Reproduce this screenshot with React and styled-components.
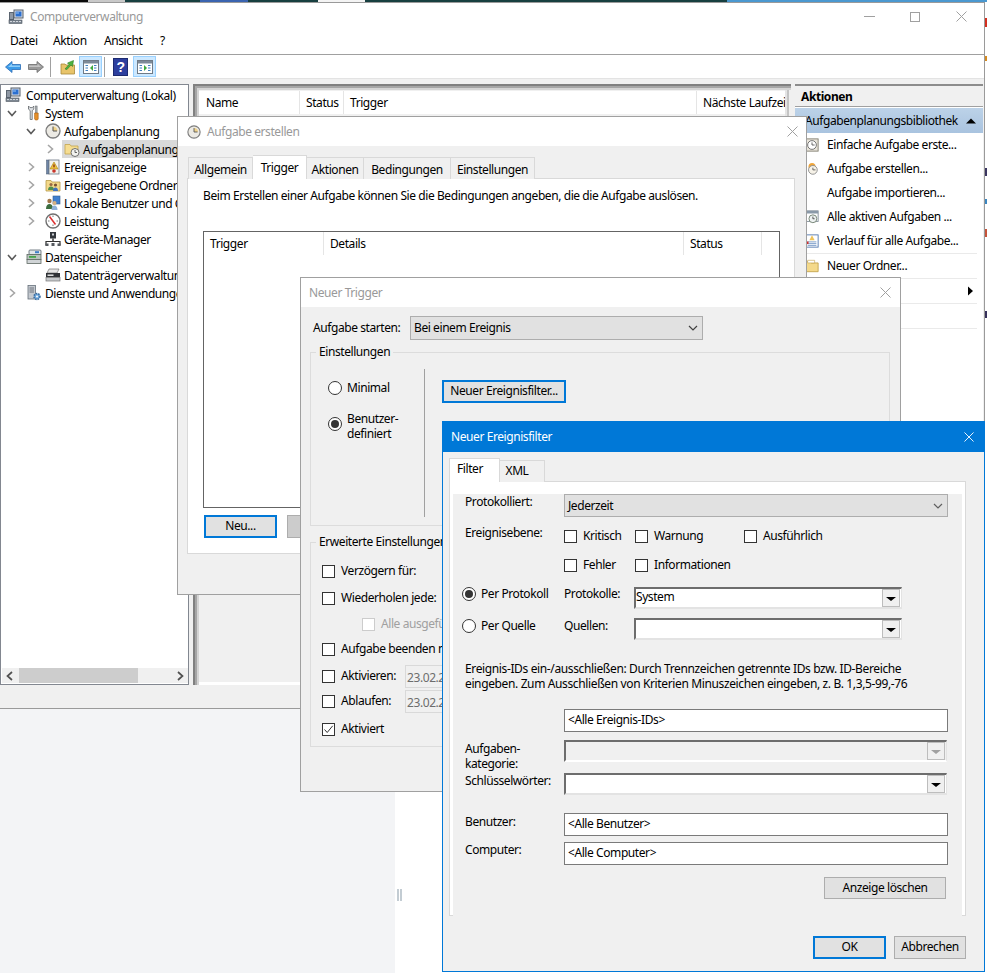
import React from "react";
import styled, { createGlobalStyle } from "styled-components";

const GlobalStyle = createGlobalStyle`
  html, body { margin: 0; padding: 0; background: #fff; overflow: hidden; }
  * { box-sizing: border-box; }
  body {
    font-family: "Noto Sans", "Open Sans", sans-serif;
    font-size: 12px;
    line-height: 16px;
    letter-spacing: -0.42px;
    color: #000;
  }
`;

/* ---------- desktop ---------- */

const Desktop = styled.div`
  position: relative;
  width: 987px;
  height: 973px;
  overflow: hidden;
`;
const Backdrop = styled.div`
  display: grid;
  grid-template-columns: 395px 1fr;
  height: 973px;
`;
const BackdropLeft = styled.div`
  background: #f3f4f6;
`;
const BackdropRight = styled.div`
  background: #fff;
  padding: 889px 0 0 2px;
`;
const Grip = styled.div`
  width: 5px;
  height: 12px;
  border-left: 2px solid #c3ccd3;
  border-right: 2px solid #c3ccd3;
`;
const TopStrip = styled.div`
  position: absolute;
  left: 0;
  top: 0;
  width: 987px;
  height: 2px;
  display: flex;
`;
const StripPiece = styled.div`
  width: ${(p) => p.$w}px;
  background: ${(p) => p.$c};
`;
const Speck = styled.div`
  position: absolute;
  left: 985px;
  top: ${(p) => p.$y}px;
  width: 2px;
  height: ${(p) => p.$h || 8}px;
  background: ${(p) => p.$c};
`;
const Window = styled.div`
  position: absolute;
  left: ${(p) => p.$x}px;
  top: ${(p) => p.$y}px;
  width: ${(p) => p.$w}px;
  height: ${(p) => p.$h}px;
  background: #f0f0f0;
  border: 1px solid ${(p) => p.$border || "#a0a0a0"};
  overflow: hidden;
  z-index: ${(p) => p.$z};
  display: flex;
  flex-direction: column;
`;
const TitleBar = styled.div`
  flex: none;
  height: ${(p) => p.$h}px;
  background: ${(p) => (p.$active ? "#0078d7" : "#fff")};
  color: ${(p) => (p.$active ? "#fff" : "#999")};
  display: flex;
  align-items: center;
  padding-left: ${(p) => p.$pad}px;
  gap: 6px;
`;
const TitleText = styled.span`
  flex: 1;
  white-space: nowrap;
`;
const CloseSlot = styled.div`
  flex: none;
  width: 46px;
  display: flex;
  justify-content: center;
  align-items: center;
`;

/* ---------- main window ---------- */

const MenuBar = styled.div`
  flex: none;
  height: 25px;
  background: #fff;
  border-bottom: 1px solid #a0a0a0;
  display: flex;
  align-items: center;
  padding: 0 0 2px 10px;
`;
const MenuItem = styled.span`
  flex: none;
  width: ${(p) => p.$w}px;
`;
const ToolBar = styled.div`
  flex: none;
  height: 24px;
  background: #fff;
  border-bottom: 1px solid #e3e3e3;
  display: flex;
  align-items: center;
  padding-left: 5px;
`;
const ToolGap = styled.div`
  width: ${(p) => p.$w}px;
  flex: none;
`;
const ToolSep = styled.div`
  flex: none;
  width: 1px;
  height: 20px;
  background: #a0a0a0;
`;
const ToolToggle = styled.div`
  flex: none;
  width: 23px;
  height: 21px;
  background: #cce8ff;
  border: 1px solid #99d1ff;
  display: flex;
  align-items: center;
  justify-content: center;
`;
const Workspace = styled.div`
  flex: none;
  height: 606px;
  padding-top: 5px;
  display: grid;
  grid-template-columns: 189px 598px 188px;
  column-gap: 4px;
`;
const TreePanel = styled.div`
  background: #fff;
  border: 1px solid #828790;
  display: flex;
  flex-direction: column;
  overflow: hidden;
`;
const TreeRows = styled.div`
  flex: 1;
  padding-top: 1px;
`;
const TreeRow = styled.div`
  height: 18px;
  display: flex;
  align-items: center;
  white-space: nowrap;
  padding-left: ${(p) => p.$indent}px;
  gap: ${(p) => p.$gap ?? 3}px;
`;
const TreeLabel = styled.span`
  padding-top: 1px;
`;
const Expander = styled.div`
  flex: none;
  width: 16px;
  display: flex;
  align-items: center;
`;
const TreeSelected = styled.div`
  display: flex;
  align-items: center;
  gap: 3px;
  height: 18px;
  background: #d9d9d9;
  padding: 0 30px 0 2px;
  margin-left: -2px;
`;
const HScroll = styled.div`
  flex: none;
  height: 15px;
  margin: 0 0 1px 1px;
  background: #f0f0f0;
  display: flex;
  align-items: center;
  justify-content: space-between;
`;
const ScrollThumb = styled.div`
  width: 119px;
  height: 15px;
  background: #cdcdcd;
  margin-left: 2px;
`;
const ScrollBtn = styled.div`
  flex: none;
  width: 15px;
  display: flex;
  justify-content: center;
`;
const ScrollSpace = styled.div`
  flex: 1;
`;
const CenterPanel = styled.div`
  padding: 7px 6px 4px 6px;
  background: #f0f0f0;
  box-shadow: inset 2px 2px 0 #808080, inset 4px 4px 0 #a6a6a6, inset 6px 6px 0 #d4d4d4,
    inset -2px 0 0 #f0f0f0, inset -4px 0 0 #c4c4c4, inset -6px 0 0 #e4e4e4,
    inset 0 -1px 0 #fff, inset 0 -3px 0 #fff;
`;
const CenterHead = styled.div`
  height: 23px;
  background: #fff;
  display: flex;
`;
const HeadCell = styled.div`
  flex: none;
  width: ${(p) => p.$w}px;
  padding-left: ${(p) => p.$pad || 6}px;
  border-right: ${(p) => (p.$end ? "0" : "1px solid #e5e5e5")};
  line-height: 23px;
  white-space: nowrap;
  overflow: hidden;
`;
const ActionsPanel = styled.div`
  background: #fff;
  border-top: 2px solid #8c8c8c;
  display: flex;
  flex-direction: column;
`;
const ActionsHead = styled.div`
  height: 21px;
  background: #f0f0f0;
  border-bottom: 1px solid #a0a0a0;
  font-weight: 700;
  padding: 3px 0 0 6px;
  margin-bottom: 1px;
`;
const ActionsGroup = styled.div`
  height: 25px;
  background: linear-gradient(#bcd2e8, #a9c3df);
  display: flex;
  align-items: center;
  justify-content: space-between;
  padding: 0 7px 0 10px;
`;
const ActionItem = styled.div`
  height: ${(p) => p.$h || 24}px;
  display: flex;
  align-items: center;
  padding: 0 ${(p) => p.$right ?? 7}px 0 10px;
  margin-right: 6px;
  gap: 8px;
  white-space: nowrap;
  border-bottom: ${(p) => (p.$line ? "1px solid #eaeaea" : "0")};
`;
const ActionIconSlot = styled.div`
  flex: none;
  width: 14px;
  height: 14px;
`;
const ActionLabel = styled.span`
  flex: 1;
`;
const StatusBar = styled.div`
  flex: none;
  height: 24px;
  border-bottom: 1px solid #a0a0a0;
  background: #f0f0f0;
  margin-right: -1px;
`;

/* ---------- dialog parts ---------- */

const TabStrip = styled.div`
  flex: none;
  display: flex;
  align-items: flex-end;
  height: ${(p) => p.$h}px;
  padding-left: ${(p) => p.$pad}px;
`;
const Tab = styled.div`
  flex: none;
  width: ${(p) => p.$w}px;
  height: ${(p) => (p.$active ? 24 : 22)}px;
  padding-right: ${(p) => p.$trim || 0}px;
  background: ${(p) => (p.$active ? "#fff" : "#f0f0f0")};
  border: 1px solid #d9d9d9;
  border-bottom: 0;
  border-left-width: ${(p) => (p.$joined ? 0 : 1)}px;
  line-height: ${(p) => p.$lh || 23}px;
  text-align: center;
  white-space: nowrap;
  position: relative;
  z-index: ${(p) => (p.$active ? 1 : 0)};
  margin-bottom: -1px;
`;
const TabPanel = styled.div`
  flex: none;
  height: ${(p) => p.$h}px;
  margin: ${(p) => p.$m};
  background: #fff;
  border: 1px solid #d9d9d9;
  padding: ${(p) => p.$pad};
`;
const Sentence = styled.div`
  white-space: nowrap;
`;
const TriggerTable = styled.div`
  margin-top: 27px;
  width: 577px;
  height: 277px;
  border: 1px solid #646464;
  background: #fff;
`;
const TriggerHead = styled.div`
  height: 23px;
  display: flex;
`;
const ButtonRow = styled.div`
  display: flex;
  gap: 10px;
  margin: 7px 0 0 1px;
`;
const Button = styled.div`
  flex: none;
  width: ${(p) => p.$w}px;
  height: ${(p) => p.$h || 23}px;
  background: ${(p) => (p.$off ? "#cccccc" : "#e1e1e1")};
  border: ${(p) => (p.$focus ? "2px solid #0078d7" : "1px solid #adadad")};
  text-align: center;
  line-height: ${(p) => (p.$h || 23) - (p.$focus ? 5 : 3)}px;
  white-space: nowrap;
`;
const FieldRow = styled.div`
  display: flex;
  align-items: center;
  margin: ${(p) => p.$m || 0};
`;
const FieldLabel = styled.div`
  flex: none;
  width: ${(p) => p.$w}px;
  white-space: nowrap;
`;
const DropDown = styled.div`
  flex: none;
  width: ${(p) => p.$w}px;
  height: ${(p) => p.$h}px;
  background: #e1e1e1;
  border: 1px solid #adadad;
  padding: 0 4px 0 3px;
  display: flex;
  align-items: center;
  justify-content: space-between;
`;
const Group = styled.fieldset`
  margin: ${(p) => p.$m};
  padding: 0;
  min-width: 0;
  width: 580px;
  height: ${(p) => p.$h}px;
  border: 1px solid #dcdcdc;
`;
const GroupTitle = styled.legend`
  margin-left: 5px;
  padding: 0 3px;
  line-height: 16px;
  white-space: nowrap;
`;
const SettingsBody = styled.div`
  display: flex;
  padding: 9px 0 0 17px;
  height: 157px;
`;
const ModeColumn = styled.div`
  flex: none;
  width: 97px;
  border-right: 1px solid #a0a0a0;
`;
const RadioRow = styled.div`
  display: flex;
  align-items: ${(p) => (p.$top ? "flex-start" : "center")};
  gap: 5px;
  margin: ${(p) => p.$m || 0};
  white-space: nowrap;
  line-height: 15px;
`;
const Radio = styled.div`
  flex: none;
  width: 14px;
  height: 14px;
  margin-top: ${(p) => p.$mt || 0}px;
  border-radius: 50%;
  border: 1px solid #333;
  background: #fff;
  display: flex;
  align-items: center;
  justify-content: center;
  &::after {
    content: "";
    display: ${(p) => (p.$on ? "block" : "none")};
    width: 8px;
    height: 8px;
    border-radius: 50%;
    background: #333;
  }
`;
const FilterButtonColumn = styled.div`
  padding: 11px 0 0 17px;
`;
const AdvancedBody = styled.div`
  padding-left: 11px;
`;
const CheckRow = styled.div`
  display: flex;
  align-items: center;
  height: 16px;
  gap: 6px;
  margin-top: ${(p) => p.$mt}px;
  margin-left: ${(p) => p.$indent || 0}px;
  color: ${(p) => (p.$off ? "#a0a0a0" : "#000")};
  white-space: nowrap;
`;
const Check = styled.div`
  flex: none;
  width: 13px;
  height: 13px;
  background: #fff;
  border: 1px solid ${(p) => (p.$off ? "#cccccc" : "#333")};
  display: flex;
  align-items: center;
  justify-content: center;
`;
const DateField = styled.div`
  flex: none;
  width: 60px;
  height: 23px;
  background: #f0f0f0;
  border: 1px solid #d9d9d9;
  color: #6d6d6d;
  padding: 4px 0 0 1px;
  overflow: hidden;
`;

/* ---------- filter dialog ---------- */

const FilterPanel = styled.div`
  flex: none;
  height: 435px;
  margin: 0 18px 0 6px;
  background: #fff;
  border: 1px solid #d9d9d9;
  padding: 3px;
`;
const FilterInner = styled.div`
  height: 100%;
  background: #f0f0f0;
  padding: 0 14px 0 12px;
`;
const FilterRow = styled.div`
  display: flex;
  align-items: flex-start;
  height: ${(p) => p.$h}px;
  margin-top: ${(p) => p.$mt}px;
`;
const RowLabel = styled.div`
  flex: none;
  width: 99px;
  margin-top: ${(p) => p.$up || 0}px;
  line-height: 15px;
  white-space: nowrap;
`;
const RadioCell = styled.div`
  flex: none;
  width: 102px;
  margin: ${(p) => p.$up}px 0 0 -3px;
`;
const SubLabel = styled.div`
  flex: none;
  width: 70px;
  white-space: nowrap;
  margin-top: ${(p) => p.$up || 0}px;
`;
const Checks = styled.div`
  display: flex;
  align-items: center;
  height: 18px;
`;
const CheckItem = styled.div`
  display: flex;
  align-items: center;
  gap: 6px;
  width: ${(p) => p.$w}px;
  white-space: nowrap;
`;
const Combo = styled.div`
  flex: none;
  width: ${(p) => p.$w}px;
  height: 22px;
  background: ${(p) => (p.$off ? "#f0f0f0" : "#fff")};
  border-top: 2px solid #6d6d6d;
  border-left: 2px solid #6d6d6d;
  border-right: 1px solid #e3e3e3;
  border-bottom: 2px solid ${(p) => (p.$off ? "#fff" : "#e3e3e3")};
  display: flex;
  justify-content: space-between;
  align-items: flex-start;
  padding: 0 1px 0 0;
  line-height: 15px;
`;
const ComboArrow = styled.div`
  flex: none;
  width: 18px;
  height: 18px;
  background: #f0f0f0;
  border: 1px solid #bdbdbd;
  display: flex;
  align-items: center;
  justify-content: center;
  &::after {
    content: "";
    border-top: 4px solid ${(p) => (p.$off ? "#a0a0a0" : "#000")};
    border-left: 5px solid transparent;
    border-right: 5px solid transparent;
    margin-top: 2px;
  }
`;
const TextBox = styled.div`
  flex: none;
  width: 384px;
  height: 23px;
  background: #fff;
  border: 1px solid #7a7a7a;
  padding-left: 3px;
  line-height: 20px;
  white-space: nowrap;
`;
const Hint = styled.div`
  margin-top: 21px;
  line-height: 15px;
  white-space: nowrap;
  letter-spacing: -0.37px;
`;
const ClearRow = styled.div`
  display: flex;
  justify-content: flex-end;
  margin: 12px 2px 0 0;
`;
const FooterRow = styled.div`
  flex: none;
  display: flex;
  justify-content: flex-end;
  gap: 8px;
  margin: 20px 18px 0 0;
`;

/* ---------- drawings ---------- */

const Svg = ({ size = 16, children, ...rest }) => (
  <svg width={size} height={size} viewBox="0 0 16 16" style={{ flex: "none", display: "block" }} {...rest}>
    {children}
  </svg>
);

const CloseX = ({ color, size = 11 }) => (
  <svg width={size} height={size} viewBox="0 0 11 11" style={{ display: "block" }}>
    <path d="M0.5 0.5 L10.5 10.5 M10.5 0.5 L0.5 10.5" stroke={color} strokeWidth="1" fill="none" />
  </svg>
);

const ChevronDown = ({ color = "#404040" }) => (
  <svg width="10" height="6" viewBox="0 0 10 6" style={{ display: "block", flex: "none" }}>
    <path d="M1 1 L5 5 L9 1" stroke={color} strokeWidth="1.2" fill="none" />
  </svg>
);
const ChevronOpen = () => (
  <svg width="10" height="7" viewBox="0 0 10 7" style={{ display: "block" }}>
    <path d="M1 1 L5 5.5 L9 1" stroke="#5a5a5a" strokeWidth="1.6" fill="none" />
  </svg>
);
const ChevronClosed = () => (
  <svg width="7" height="10" viewBox="0 0 7 10" style={{ display: "block", marginLeft: 2 }}>
    <path d="M1 1 L5.5 5 L1 9" stroke="#a6a6a6" strokeWidth="1.6" fill="none" />
  </svg>
);
const ArrowSmall = ({ right }) => (
  <svg width="7" height="10" viewBox="0 0 7 10" style={{ display: "block" }}>
    <path d={right ? "M1 1 L5.5 5 L1 9" : "M6 1 L1.5 5 L6 9"} stroke="#505050" strokeWidth="1.7" fill="none" />
  </svg>
);
const CheckMark = () => (
  <svg width="11" height="11" viewBox="0 0 11 11" style={{ display: "block" }}>
    <path d="M1.5 5.5 L4.2 8.5 L9.7 1.8" stroke="#333" strokeWidth="1" fill="none" />
  </svg>
);
const Triangle = ({ d }) => (
  <svg width="10" height="10" viewBox="0 0 10 10" style={{ display: "block", flex: "none" }}>
    <path d={d} fill="#000" />
  </svg>
);

const ComputerIcon = () => (
  <Svg>
    <rect x="6" y="1" width="9" height="8" fill="#d8dde4" stroke="#56606c" />
    <rect x="7.5" y="2.5" width="6" height="5" fill="#2a6fd0" />
    <path d="M8 3.5h3v1H8z" fill="#9cc8f5" />
    <rect x="1.5" y="3.5" width="4" height="7" fill="#8f98a4" stroke="#5b6570" />
    <rect x="1" y="11" width="13" height="3.5" fill="#7d8792" stroke="#4f5862" strokeWidth="0.6" />
    <path d="M2 12.5h2M5 12.5h2M8 12.5h2M11 12.5h2" stroke="#e7eaee" strokeWidth="0.8" />
  </Svg>
);
const ToolsIcon = () => (
  <Svg>
    <path d="M2.5 1v3.2L4.2 5.6V14.5h2V5.6L7.8 4.2V1L6.4 2.6H4L2.5 1z" fill="#dfe2e5" stroke="#606468" strokeWidth="0.8" />
    <rect x="9.5" y="1" width="1.6" height="7" fill="#a8adb2" stroke="#606468" strokeWidth="0.5" />
    <path d="M8.6 8h3.6v6a1.4 1.4 0 0 1-1.4 1h-.8a1.4 1.4 0 0 1-1.4-1z" fill="#e6902a" stroke="#a85e10" strokeWidth="0.6" />
  </Svg>
);
const ClockIcon = ({ size = 16 }) => (
  <Svg size={size}>
    <circle cx="8" cy="8" r="7" fill="#eceae4" stroke="#7d7d7d" strokeWidth="1.3" />
    <path d="M8 8V3.5A4.5 4.5 0 0 1 12.5 8z" fill="#efd28a" />
    <path d="M8 3.5V8H12" stroke="#555" strokeWidth="1" fill="none" />
  </Svg>
);
const FolderClockIcon = () => (
  <Svg>
    <path d="M1 3.5h5l1 1.5h7v8H1z" fill="#f6dd91" stroke="#c3a44e" strokeWidth="0.8" />
    <circle cx="11" cy="11.5" r="4" fill="#f3f3ef" stroke="#6f6f6f" />
    <path d="M11 9v2.5h2" stroke="#555" strokeWidth="0.9" fill="none" />
  </Svg>
);
const EventIcon = () => (
  <Svg>
    <rect x="1.5" y="1" width="2.5" height="14" fill="#6f86a8" stroke="#47586f" strokeWidth="0.5" />
    <rect x="4" y="1" width="10" height="14" fill="#f2f2ee" stroke="#6d7885" strokeWidth="0.8" />
    <path d="M9 3 L13 10 H5z" fill="#eec23f" stroke="#a97f12" strokeWidth="0.6" />
    <rect x="8.4" y="5.5" width="1.2" height="2.8" fill="#7a1d10" />
    <circle cx="9" cy="12" r="1.8" fill="#c9352a" />
  </Svg>
);
const SharedIcon = () => (
  <Svg>
    <path d="M1 3.5h5l1 1.5h8v9H1z" fill="#f3d98a" stroke="#b69a46" strokeWidth="0.8" />
    <circle cx="6" cy="7.5" r="1.6" fill="#9a6a42" />
    <path d="M3 13c0-2.5 1.4-3.5 3-3.5S9 10.5 9 13z" fill="#4f8f4f" />
    <circle cx="10.5" cy="8" r="1.6" fill="#7a5233" />
    <path d="M8 14c0-2.5 1.2-3.5 2.5-3.5S13 11.5 13 14z" fill="#3f71bd" />
  </Svg>
);
const UsersIcon = () => (
  <Svg>
    <rect x="8" y="1" width="7" height="8" fill="#3f7fcf" stroke="#375e8c" strokeWidth="0.6" />
    <circle cx="4.5" cy="6" r="2.2" fill="#a27648" />
    <path d="M1 14c0-3.5 1.5-5 3.5-5S8 10.5 8 14z" fill="#3c6d3f" />
    <circle cx="9.5" cy="8" r="2" fill="#d4b083" />
    <path d="M6.5 15c0-3 1.3-4.5 3-4.5s3 1.5 3 4.5z" fill="#8fb2da" />
  </Svg>
);
const GaugeIcon = () => (
  <Svg>
    <circle cx="8" cy="8" r="7" fill="#fff" stroke="#707070" strokeWidth="1.4" />
    <path d="M4.5 3.5 L10.5 11.5" stroke="#d33" strokeWidth="1.5" />
    <path d="M8 2.5v1.5M13 8h-1.5M3 8h1.5M8 13v-1.5" stroke="#555" strokeWidth="0.8" />
  </Svg>
);
const DeviceIcon = () => (
  <Svg>
    <rect x="5" y="1" width="6" height="6.5" fill="#33373c" />
    <rect x="7" y="2.5" width="2" height="2" fill="#cfd3d7" />
    <rect x="7.3" y="7.5" width="1.4" height="3" fill="#333" />
    <path d="M1 14.5v-4h14v4" stroke="#333" strokeWidth="1.2" fill="none" />
    <rect x="0.5" y="12.5" width="3" height="2.5" fill="#55595e" />
    <rect x="6.5" y="12" width="3" height="3" fill="#55595e" />
    <rect x="12.5" y="12.5" width="3" height="2.5" fill="#55595e" />
  </Svg>
);
const StorageIcon = () => (
  <Svg>
    <rect x="3" y="1" width="12" height="4.5" rx="1" fill="#dfe6ea" stroke="#55626c" strokeWidth="0.8" />
    <rect x="9" y="2.2" width="4" height="2" fill="#3e7ec9" />
    <rect x="1" y="5.5" width="14" height="5" fill="#b8c4bd" stroke="#5f6a64" strokeWidth="0.8" />
    <rect x="3" y="7" width="7" height="1.8" fill="#46a54c" />
    <rect x="1" y="10.5" width="14" height="4" fill="#d0d4d6" stroke="#5f6a64" strokeWidth="0.8" />
  </Svg>
);
const DiskIcon = () => (
  <Svg>
    <path d="M4 2h10l-2 4H2z" fill="#e4e4e4" stroke="#777" strokeWidth="0.7" />
    <rect x="1" y="6" width="14" height="4.5" fill="#2f3236" />
    <rect x="2.5" y="7.5" width="6" height="1.4" fill="#f0f0f0" />
    <rect x="1" y="10.5" width="14" height="3.5" fill="#c6c9cc" stroke="#777" strokeWidth="0.7" />
  </Svg>
);
const ServicesIcon = () => (
  <Svg>
    <rect x="2" y="0.5" width="7.5" height="13.5" fill="#c4c9cf" stroke="#66707a" strokeWidth="0.8" />
    <path d="M3.5 3h4.5M3.5 5h4.5M3.5 7h4.5" stroke="#5a6169" strokeWidth="0.8" />
    <circle cx="11" cy="11.5" r="3" fill="#6ea6da" stroke="#396a9e" strokeWidth="1.5" strokeDasharray="1.5 1" />
    <circle cx="11" cy="11.5" r="1" fill="#fff" />
  </Svg>
);
const BackIcon = () => (
  <Svg>
    <path d="M0.5 8 L7 2.5 V5.5 H15.5 V10.5 H7 V13.5z" fill="#3c9be8" stroke="#2c6cb5" strokeWidth="0.8" />
    <path d="M3 8 L7 4.5 V6.5 H15 V8z" fill="#8fcdf7" />
  </Svg>
);
const ForwardIcon = () => (
  <Svg>
    <path d="M15.5 8 L9 2.5 V5.5 H0.5 V10.5 H9 V13.5z" fill="#9a9a9a" stroke="#6c6c6c" strokeWidth="0.8" />
    <path d="M1 6.5h8.5V4.5L13 8H1z" fill="#c4c4c4" />
  </Svg>
);
const UpFolderIcon = () => (
  <Svg>
    <path d="M1 5h4l1 1h8.5v9H1z" fill="#e8c46a" stroke="#a88a3a" strokeWidth="0.8" />
    <path d="M5 10 L9 5.5 L7.5 4 L13.5 1.5 L12.5 7.5 L11 6 L7 10.5z" fill="#4fb33f" stroke="#2e7d25" strokeWidth="0.6" />
  </Svg>
);
const PaneIcon = ({ right }) => (
  <Svg>
    <rect x="0.5" y="1.5" width="15" height="13" fill="#fff" stroke="#6f7a86" />
    <rect x="1" y="2" width="14" height="2.5" fill="#7d8a98" />
    <path d="M2.5 6.5h2.5M2.5 9h2.5M2.5 11.5h2.5M11 6.5h2.5M11 9h2.5M11 11.5h2.5" stroke="#3f7fc0" strokeWidth="1" />
    <path d={right ? "M7 6 L10 9 L7 12z" : "M10 6 L7 9 L10 12z"} fill="#3faa3f" />
  </Svg>
);
const HelpIcon = () => (
  <svg width="15" height="18" viewBox="0 0 15 18" style={{ display: "block", flex: "none" }}>
    <rect x="0.5" y="0.5" width="14" height="17" fill="#2d3f9e" stroke="#1c2a70" />
    <text x="7.5" y="14" textAnchor="middle" fontSize="14" fontWeight="700" fill="#fff" fontFamily="Liberation Sans, sans-serif">?</text>
  </svg>
);
const SimpleTaskIcon = () => (
  <Svg size={14}>
    <rect x="1" y="1" width="14" height="14" fill="#e8e4da" stroke="#7f7a6d" />
    <circle cx="8" cy="8" r="5" fill="#fff" stroke="#666" />
    <path d="M8 5v3h3" stroke="#555" fill="none" />
  </Svg>
);
const NewTaskIcon = () => (
  <Svg size={14}>
    <circle cx="8" cy="5" r="4" fill="#f0a63c" />
    <circle cx="9" cy="9" r="5" fill="#f6f2e8" stroke="#888" />
    <path d="M9 6.5V9h3" stroke="#555" fill="none" />
  </Svg>
);
const ActiveTasksIcon = () => (
  <Svg size={14}>
    <rect x="1" y="1" width="14" height="12" fill="#fff" stroke="#7a8794" />
    <rect x="1" y="1" width="14" height="3" fill="#8a99a8" />
    <circle cx="9" cy="10" r="4.5" fill="#eef2f2" stroke="#6a7a6a" />
    <path d="M9 7.5V10h2" stroke="#444" fill="none" />
  </Svg>
);
const HistoryIcon = () => (
  <Svg size={14}>
    <rect x="1" y="1" width="14" height="14" fill="#fff" stroke="#4c74ad" />
    <path d="M8 1.5 L11 7 H5z" fill="#efc35a" />
    <path d="M3 9h10M3 11h10M3 13h10" stroke="#6f93c4" />
    <rect x="1" y="8.5" width="3" height="3" fill="#cf2f2f" />
  </Svg>
);
const FolderIcon = () => (
  <Svg size={14}>
    <path d="M1 3h5l1 1.5h8v10H1z" fill="#f4d98a" stroke="#c2a24c" />
    <path d="M3 1.5h8v3H3z" fill="#fff" stroke="#c2a24c" strokeWidth="0.7" />
  </Svg>
);

/* ---------- data ---------- */

const topPieces = [
  [88, "#0a0a0a"], [37, "#c9c9c9"], [75, "#173f40"], [48, "#3a64b0"], [70, "#173f40"],
  [47, "#f4f4f4"], [362, "#173f40"], [260, "#4a98d0"],
];

const specks = [
  { y: 18, c: "#d32f1f", h: 9 }, { y: 56, c: "#d58a20", h: 5 }, { y: 168, c: "#3b3560", h: 8 },
  { y: 199, c: "#3a86c0", h: 5 }, { y: 229, c: "#c5533a", h: 8 }, { y: 311, c: "#35305a", h: 7 },
];

const menus = [["Datei", 43], ["Aktion", 51], ["Ansicht", 56], ["?", 10]];

const actions = [
  { label: "Einfache Aufgabe erste...", Icon: SimpleTaskIcon },
  { label: "Aufgabe erstellen...", Icon: NewTaskIcon },
  { label: "Aufgabe importieren..." },
  { label: "Alle aktiven Aufgaben ...", Icon: ActiveTasksIcon },
  { label: "Verlauf für alle Aufgabe...", Icon: HistoryIcon, line: true },
  { label: "Neuer Ordner...", Icon: FolderIcon, line: true },
];

const taskTabs = [
  ["Allgemein", 65], ["Trigger", 54, true], ["Aktionen", 57], ["Bedingungen", 87], ["Einstellungen", 84],
];

const treeItems = [
  { label: "Computerverwaltung (Lokal)", Icon: ComputerIcon, indent: 4, gap: 5, root: true },
  { label: "System", Icon: ToolsIcon, indent: 6, Arrow: ChevronOpen },
  { label: "Aufgabenplanung", Icon: ClockIcon, indent: 25, Arrow: ChevronOpen },
  { label: "Aufgabenplanungsbibliothek", Icon: FolderClockIcon, indent: 44, Arrow: ChevronClosed, selected: true },
  { label: "Ereignisanzeige", Icon: EventIcon, indent: 25, Arrow: ChevronClosed },
  { label: "Freigegebene Ordner", Icon: SharedIcon, indent: 25, Arrow: ChevronClosed },
  { label: "Lokale Benutzer und Gruppen", Icon: UsersIcon, indent: 25, Arrow: ChevronClosed },
  { label: "Leistung", Icon: GaugeIcon, indent: 25, Arrow: ChevronClosed },
  { label: "Geräte-Manager", Icon: DeviceIcon, indent: 25 },
  { label: "Datenspeicher", Icon: StorageIcon, indent: 6, Arrow: ChevronOpen },
  { label: "Datenträgerverwaltung", Icon: DiskIcon, indent: 25 },
  { label: "Dienste und Anwendungen", Icon: ServicesIcon, indent: 6, Arrow: ChevronClosed },
];

const Check13 = ({ on, off }) => <Check $off={off}>{on && <CheckMark />}</Check>;

export default function App() {
  return (
    <Desktop>
      <GlobalStyle />
      <Backdrop>
        <BackdropLeft />
        <BackdropRight>
          <Grip />
        </BackdropRight>
      </Backdrop>
      <TopStrip>
        {topPieces.map(([w, c], i) => (
          <StripPiece key={i} $w={w} $c={c} />
        ))}
      </TopStrip>
      {specks.map((s, i) => (
        <Speck key={i} $y={s.y} $c={s.c} $h={s.h} />
      ))}

      {/* Computerverwaltung */}
      <Window $x={-1} $y={2} $w={986} $h={707} $z={1} $border="#9a9a9a">
        <TitleBar $h={27} $pad={8}>
          <ComputerIcon />
          <TitleText>Computerverwaltung</TitleText>
          <CloseSlot>
            <svg width="11" height="11" viewBox="0 0 11 11"><path d="M0 5.5h11" stroke="#a0a0a0" fill="none" /></svg>
          </CloseSlot>
          <CloseSlot style={{ marginLeft: -6 }}>
            <svg width="10" height="10" viewBox="0 0 10 10"><rect x="0.5" y="0.5" width="9" height="9" stroke="#a0a0a0" fill="none" /></svg>
          </CloseSlot>
          <CloseSlot style={{ marginLeft: -6 }}>
            <CloseX color="#a0a0a0" />
          </CloseSlot>
        </TitleBar>
        <MenuBar>
          {menus.map(([label, w]) => (
            <MenuItem key={label} $w={w}>{label}</MenuItem>
          ))}
        </MenuBar>
        <ToolBar>
          <BackIcon />
          <ToolGap $w={7} />
          <ForwardIcon />
          <ToolGap $w={6} />
          <ToolSep />
          <ToolGap $w={9} />
          <UpFolderIcon />
          <ToolGap $w={3} />
          <ToolToggle>
            <PaneIcon />
          </ToolToggle>
          <ToolGap $w={2} />
          <ToolSep />
          <ToolGap $w={8} />
          <HelpIcon />
          <ToolGap $w={5} />
          <ToolToggle>
            <PaneIcon right />
          </ToolToggle>
        </ToolBar>
        <Workspace>
          <TreePanel>
            <TreeRows>
              {treeItems.map(({ label, Icon, indent, gap, root, Arrow, selected }) => (
                <TreeRow key={label} $indent={indent} $gap={gap}>
                  {!root && <Expander>{Arrow && <Arrow />}</Expander>}
                  {selected ? (
                    <TreeSelected>
                      <Icon />
                      <TreeLabel>{label}</TreeLabel>
                    </TreeSelected>
                  ) : (
                    <>
                      <Icon />
                      <TreeLabel>{label}</TreeLabel>
                    </>
                  )}
                </TreeRow>
              ))}
            </TreeRows>
            <HScroll>
              <ScrollBtn><ArrowSmall /></ScrollBtn>
              <ScrollThumb />
              <ScrollSpace />
              <ScrollBtn><ArrowSmall right /></ScrollBtn>
            </HScroll>
          </TreePanel>
          <CenterPanel>
            <CenterHead>
              <HeadCell $w={101} $pad={7}>Name</HeadCell>
              <HeadCell $w={44}>Status</HeadCell>
              <HeadCell $w={353}>Trigger</HeadCell>
              <HeadCell $w={88} $end>Nächste Laufzeit</HeadCell>
            </CenterHead>
          </CenterPanel>
          <ActionsPanel>
            <ActionsHead>Aktionen</ActionsHead>
            <ActionsGroup>
              <span>Aufgabenplanungsbibliothek</span>
              <Triangle d="M0 7.5 L5 2.5 L10 7.5z" />
            </ActionsGroup>
            {actions.map(({ label, Icon, line }) => (
              <ActionItem key={label} $line={line} $h={line ? 25 : 24}>
                <ActionIconSlot>{Icon && <Icon />}</ActionIconSlot>
                <ActionLabel>{label}</ActionLabel>
              </ActionItem>
            ))}
            <ActionItem $line $h={25} $right={2}>
              <ActionLabel />
              <Triangle d="M3 0.5 L8 5 L3 9.5z" />
            </ActionItem>
            <ActionItem $line $h={25} />
          </ActionsPanel>
        </Workspace>
        <StatusBar />
      </Window>

      {/* Aufgabe erstellen */}
      <Window $x={177} $y={116} $w={630} $h={479} $z={2}>
        <TitleBar $h={29} $pad={9}>
          <ClockIcon size={14} />
          <TitleText>Aufgabe erstellen</TitleText>
          <CloseSlot style={{ marginRight: -9 }}>
            <CloseX color="#a0a0a0" />
          </CloseSlot>
        </TitleBar>
        <TabStrip $h={32} $pad={10}>
          {taskTabs.map(([label, w, active], i) => (
            <Tab key={label} $w={w} $active={active} $joined={i > 0}>{label}</Tab>
          ))}
        </TabStrip>
        <TabPanel $h={376} $m="0 11px 0 9px" $pad="9px 0 0 15px">
          <Sentence>Beim Erstellen einer Aufgabe können Sie die Bedingungen angeben, die die Aufgabe auslösen.</Sentence>
          <TriggerTable>
            <TriggerHead>
              <HeadCell $w={120}>Trigger</HeadCell>
              <HeadCell $w={360}>Details</HeadCell>
              <HeadCell $w={78}>Status</HeadCell>
            </TriggerHead>
          </TriggerTable>
          <ButtonRow>
            <Button $w={73} $focus>Neu...</Button>
            <Button $w={73} $off />
          </ButtonRow>
        </TabPanel>
      </Window>

      {/* Neuer Trigger */}
      <Window $x={300} $y={277} $w={601} $h={515} $z={3}>
        <TitleBar $h={29} $pad={8}>
          <TitleText>Neuer Trigger</TitleText>
          <CloseSlot style={{ marginRight: -8 }}>
            <CloseX color="#a0a0a0" />
          </CloseSlot>
        </TitleBar>
        <FieldRow $m="9px 0 0 12px">
          <FieldLabel $w={97}>Aufgabe starten:</FieldLabel>
          <DropDown $w={293} $h={24}>
            <span>Bei einem Ereignis</span>
            <ChevronDown />
          </DropDown>
        </FieldRow>
        <Group $m="4px 0 0 9px" $h={182}>
          <GroupTitle>Einstellungen</GroupTitle>
          <SettingsBody>
            <ModeColumn>
              <RadioRow $m="11px 0 0 0">
                <Radio />
                <span>Minimal</span>
              </RadioRow>
              <RadioRow $top $m="16px 0 0 0">
                <Radio $on $mt={6} />
                <span>Benutzer-<br />definiert</span>
              </RadioRow>
            </ModeColumn>
            <FilterButtonColumn>
              <Button $w={124} $focus>Neuer Ereignisfilter...</Button>
            </FilterButtonColumn>
          </SettingsBody>
        </Group>
        <Group $m="8px 0 0 9px" $h={213}>
          <GroupTitle>Erweiterte Einstellungen</GroupTitle>
          <AdvancedBody>
            <CheckRow $mt={13}><Check13 /><span>Verzögern für:</span></CheckRow>
            <CheckRow $mt={11}><Check13 /><span>Wiederholen jede:</span></CheckRow>
            <CheckRow $mt={10} $indent={40} $off><Check13 off /><span>Alle ausgeführten Tasks beenden</span></CheckRow>
            <CheckRow $mt={9}><Check13 /><span>Aufgabe beenden nach:</span></CheckRow>
            <CheckRow $mt={11}>
              <Check13 /><FieldLabel $w={58}>Aktivieren:</FieldLabel>
              <DateField>23.02.2022</DateField>
            </CheckRow>
            <CheckRow $mt={9}>
              <Check13 /><FieldLabel $w={58}>Ablaufen:</FieldLabel>
              <DateField>23.02.2023</DateField>
            </CheckRow>
            <CheckRow $mt={12}><Check13 on /><span>Aktiviert</span></CheckRow>
          </AdvancedBody>
        </Group>
      </Window>

      {/* Neuer Ereignisfilter */}
      <Window $x={442} $y={421} $w={543} $h={551} $z={4} $border="#0078d7">
        <TitleBar $h={30} $active $pad={8}>
          <TitleText>Neuer Ereignisfilter</TitleText>
          <CloseSlot style={{ marginRight: -8 }}>
            <CloseX color="#fff" size={10} />
          </CloseSlot>
        </TitleBar>
        <TabStrip $h={29} $pad={6}>
          <Tab $w={51} $active $trim={9} $lh={20}>Filter</Tab>
          <Tab $w={45} $joined $trim={10} $lh={20}>XML</Tab>
        </TabStrip>
        <FilterPanel>
          <FilterInner>
            <FilterRow $h={23} $mt={9}>
              <RowLabel>Protokolliert:</RowLabel>
              <DropDown $w={384} $h={23}>
                <span>Jederzeit</span>
                <ChevronDown color="#606060" />
              </DropDown>
            </FilterRow>
            <FilterRow $h={18} $mt={10}>
              <RowLabel $up={-2}>Ereignisebene:</RowLabel>
              <Checks>
                <CheckItem $w={71}><Check13 /><span>Kritisch</span></CheckItem>
                <CheckItem $w={109}><Check13 /><span>Warnung</span></CheckItem>
                <CheckItem><Check13 /><span>Ausführlich</span></CheckItem>
              </Checks>
            </FilterRow>
            <FilterRow $h={18} $mt={11}>
              <RowLabel />
              <Checks>
                <CheckItem $w={71}><Check13 /><span>Fehler</span></CheckItem>
                <CheckItem><Check13 /><span>Informationen</span></CheckItem>
              </Checks>
            </FilterRow>
            <FilterRow $h={22} $mt={13}>
              <RadioCell $up={-1}>
                <RadioRow><Radio $on /><span>Per Protokoll</span></RadioRow>
              </RadioCell>
              <SubLabel $up={-1}>Protokolle:</SubLabel>
              <Combo $w={268}>
                <span>System</span>
                <ComboArrow />
              </Combo>
            </FilterRow>
            <FilterRow $h={22} $mt={9}>
              <RadioCell $up={0}>
                <RadioRow><Radio /><span>Per Quelle</span></RadioRow>
              </RadioCell>
              <SubLabel>Quellen:</SubLabel>
              <Combo $w={268}>
                <span />
                <ComboArrow />
              </Combo>
            </FilterRow>
            <Hint>
              Ereignis-IDs ein-/ausschließen: Durch Trennzeichen getrennte IDs bzw. ID-Bereiche<br />
              eingeben. Zum Ausschließen von Kriterien Minuszeichen eingeben, z. B. 1,3,5-99,-76
            </Hint>
            <FilterRow $h={23} $mt={18}>
              <RowLabel />
              <TextBox>&lt;Alle Ereignis-IDs&gt;</TextBox>
            </FilterRow>
            <FilterRow $h={22} $mt={8}>
              <RowLabel $up={1}>Aufgaben-<br />kategorie:</RowLabel>
              <Combo $w={383} $off>
                <span />
                <ComboArrow $off />
              </Combo>
            </FilterRow>
            <FilterRow $h={22} $mt={11}>
              <RowLabel>Schlüsselwörter:</RowLabel>
              <Combo $w={383}>
                <span />
                <ComboArrow />
              </Combo>
            </FilterRow>
            <FilterRow $h={23} $mt={18}>
              <RowLabel $up={1}>Benutzer:</RowLabel>
              <TextBox>&lt;Alle Benutzer&gt;</TextBox>
            </FilterRow>
            <FilterRow $h={23} $mt={6}>
              <RowLabel>Computer:</RowLabel>
              <TextBox>&lt;Alle Computer&gt;</TextBox>
            </FilterRow>
            <ClearRow>
              <Button $w={122} $h={22}>Anzeige löschen</Button>
            </ClearRow>
          </FilterInner>
        </FilterPanel>
        <FooterRow>
          <Button $w={73} $focus>OK</Button>
          <Button $w={72}>Abbrechen</Button>
        </FooterRow>
      </Window>
    </Desktop>
  );
}
